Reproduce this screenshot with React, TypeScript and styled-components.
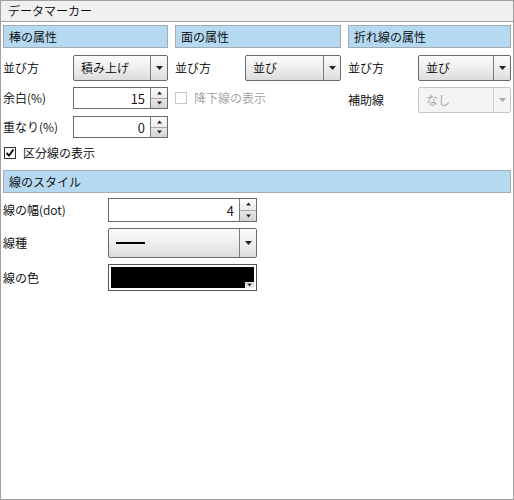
import React from "react";
import styled, { createGlobalStyle } from "styled-components";

const GlobalStyle = createGlobalStyle`
  html, body {
    margin: 0;
    padding: 0;
    background: #ffffff;
  }
  body {
    font-family: "Noto Sans CJK JP", "Noto Sans", sans-serif;
    font-size: 12px;
    font-weight: 350;
    color: #000000;
  }
`;

const Panel = styled.div`
  width: 514px;
  height: 500px;
  box-sizing: border-box;
  border: 1px solid #a0a0a0;
  background: #ffffff;
  display: flex;
  flex-direction: column;
`;

const TitleBar = styled.div`
  height: 20px;
  display: flex;
  align-items: center;
  padding-left: 7px;
  background: #f0f0f0;
  border-bottom: 1px solid #a0a0a0;
  line-height: 1;
`;

const Body = styled.div`
  padding: 3px 2px 0 2px;
  display: flex;
  flex-direction: column;
`;

const Columns = styled.div`
  display: grid;
  grid-template-columns: 165px 166px 1fr;
  column-gap: 7px;
  align-items: start;
`;

const Column = styled.div`
  display: flex;
  flex-direction: column;
`;

const SectionHeader = styled.div`
  height: 23px;
  box-sizing: border-box;
  border: 1px solid #a3acb3;
  background: #b5d9f1;
  display: flex;
  align-items: center;
  padding-left: 5px;
  line-height: 1;
`;

const Row = styled.div<{ $top: number; $h: number }>`
  display: grid;
  grid-template-columns: 70px 1fr;
  align-items: center;
  margin-top: ${(p) => p.$top}px;
  height: ${(p) => p.$h}px;
`;

const Label = styled.span`
  white-space: nowrap;
  line-height: 1;
`;

const Select = styled.div<{ $disabled?: boolean }>`
  height: 100%;
  box-sizing: border-box;
  display: flex;
  border: 1px solid ${(p) => (p.$disabled ? "#c6c6c6" : "#6a6a6a")};
  border-radius: 2px;
  background: ${(p) =>
    p.$disabled ? "#f4f4f4" : "linear-gradient(#fbfbfb 0%, #eeeeee 50%, #dcdcdc 100%)"};
  color: ${(p) => (p.$disabled ? "#a0a0a0" : "#000000")};
`;

const SelectValue = styled.div`
  flex: 1;
  display: flex;
  align-items: center;
  padding-left: 7px;
  line-height: 1;
`;

const SelectArrow = styled.div<{ $disabled?: boolean }>`
  width: 16px;
  border-left: 1px solid ${(p) => (p.$disabled ? "#d0d0d0" : "#7a7a7a")};
  display: flex;
  align-items: center;
  justify-content: center;
`;

const Spin = styled.div`
  height: 100%;
  box-sizing: border-box;
  display: flex;
  border: 1px solid #6a6a6a;
  background: #ffffff;
`;

const SpinValue = styled.div`
  flex: 1;
  display: flex;
  align-items: center;
  justify-content: flex-end;
  padding-right: 5px;
  font-size: 13px;
  line-height: 1;
`;

const SpinButtons = styled.div`
  width: 16px;
  border-left: 1px solid #7a7a7a;
  display: flex;
  flex-direction: column;
`;

const SpinButton = styled.div<{ $down?: boolean }>`
  flex: 1;
  display: flex;
  align-items: center;
  justify-content: center;
  background: ${(p) => (p.$down ? "linear-gradient(#e6e6e6, #d4d4d4)" : "linear-gradient(#fbfbfb, #ececec)")};
  border-top: ${(p) => (p.$down ? "1px solid #a8a8a8" : "none")};
`;

const Check = styled.label<{ $disabled?: boolean }>`
  display: flex;
  align-items: center;
  gap: 7px;
  color: ${(p) => (p.$disabled ? "#a0a0a0" : "#000000")};
  line-height: 1;
  white-space: nowrap;
`;

const CheckBox = styled.span<{ $disabled?: boolean }>`
  width: 12px;
  height: 12px;
  box-sizing: border-box;
  border: 1px solid ${(p) => (p.$disabled ? "#c8c8c8" : "#333333")};
  background: #ffffff;
  display: flex;
  align-items: center;
  justify-content: center;
`;

const CheckRow = styled.div`
  height: 16px;
  margin: 7px 0 9px 1px;
  display: flex;
  align-items: center;
`;

const PlainCell = styled.div`
  grid-column: 1 / span 2;
  display: flex;
  align-items: center;
  height: 100%;
`;

const StyleGrid = styled.div`
  display: grid;
  grid-template-columns: 105px 149px;
  margin-top: 5px;
  row-gap: 6px;
`;

const StyleRow = styled.div<{ $h: number }>`
  display: contents;
  & > * {
    height: ${(p) => p.$h}px;
  }
`;

const StyleLabel = styled.div`
  display: flex;
  align-items: center;
  line-height: 1;
`;

const LineSample = styled.span`
  width: 29px;
  height: 2px;
  background: #000000;
`;

const ColorBox = styled.div`
  position: relative;
  box-sizing: border-box;
  border: 1px solid #555555;
  padding: 2px;
  background: #ffffff;
`;

const ColorFill = styled.div<{ $color: string }>`
  height: 100%;
  background: ${(p) => p.$color};
`;

const ColorArrow = styled.div`
  position: absolute;
  right: 2px;
  bottom: 2px;
  width: 9px;
  height: 6px;
  background: #e8e8e8;
  display: flex;
  align-items: center;
  justify-content: center;
`;

const Triangle = ({ up = false, color = "#222", w = 7 }: { up?: boolean; color?: string; w?: number }) => (
  <svg width={w} height={4} viewBox="0 0 7 4">
    <path d={up ? "M0 4 L3.5 0 L7 4 Z" : "M0 0 L7 0 L3.5 4 Z"} fill={color} />
  </svg>
);

const Dropdown = ({ value, disabled }: { value: React.ReactNode; disabled?: boolean }) => (
  <Select $disabled={disabled}>
    <SelectValue>{value}</SelectValue>
    <SelectArrow $disabled={disabled}>
      <Triangle color={disabled ? "#a8a8a8" : "#222"} />
    </SelectArrow>
  </Select>
);

const NumberBox = ({ value }: { value: number }) => (
  <Spin>
    <SpinValue>{value}</SpinValue>
    <SpinButtons>
      <SpinButton>
        <Triangle up w={5} />
      </SpinButton>
      <SpinButton $down>
        <Triangle w={5} />
      </SpinButton>
    </SpinButtons>
  </Spin>
);

const Tick = () => (
  <svg width="10" height="10" viewBox="0 0 10 10">
    <path d="M1.5 5 L4 7.5 L8.5 1.5" stroke="#111" strokeWidth="1.9" fill="none" />
  </svg>
);

export default function App() {
  return (
    <>
      <GlobalStyle />
      <Panel>
        <TitleBar>データマーカー</TitleBar>
        <Body>
          <Columns>
            <Column>
              <SectionHeader>棒の属性</SectionHeader>
              <Row $top={7} $h={26}>
                <Label>並び方</Label>
                <Dropdown value="積み上げ" />
              </Row>
              <Row $top={6} $h={22}>
                <Label>余白(%)</Label>
                <NumberBox value={15} />
              </Row>
              <Row $top={7} $h={22}>
                <Label>重なり(%)</Label>
                <NumberBox value={0} />
              </Row>
            </Column>
            <Column>
              <SectionHeader>面の属性</SectionHeader>
              <Row $top={7} $h={26}>
                <Label>並び方</Label>
                <Dropdown value="並び" />
              </Row>
              <Row $top={6} $h={22}>
                <PlainCell>
                  <Check $disabled>
                    <CheckBox $disabled />
                    降下線の表示
                  </Check>
                </PlainCell>
              </Row>
            </Column>
            <Column>
              <SectionHeader>折れ線の属性</SectionHeader>
              <Row $top={7} $h={26}>
                <Label>並び方</Label>
                <Dropdown value="並び" />
              </Row>
              <Row $top={6} $h={26}>
                <Label>補助線</Label>
                <Dropdown value="なし" disabled />
              </Row>
            </Column>
          </Columns>
          <CheckRow>
            <Check>
              <CheckBox>
                <Tick />
              </CheckBox>
              区分線の表示
            </Check>
          </CheckRow>
          <SectionHeader>線のスタイル</SectionHeader>
          <StyleGrid>
            <StyleRow $h={24}>
              <StyleLabel>線の幅(dot)</StyleLabel>
              <NumberBox value={4} />
            </StyleRow>
            <StyleRow $h={30}>
              <StyleLabel>線種</StyleLabel>
              <Dropdown value={<LineSample />} />
            </StyleRow>
            <StyleRow $h={27}>
              <StyleLabel>線の色</StyleLabel>
              <ColorBox>
                <ColorFill $color="#000000" />
                <ColorArrow>
                  <Triangle w={5} color="#333" />
                </ColorArrow>
              </ColorBox>
            </StyleRow>
          </StyleGrid>
        </Body>
      </Panel>
    </>
  );
}
